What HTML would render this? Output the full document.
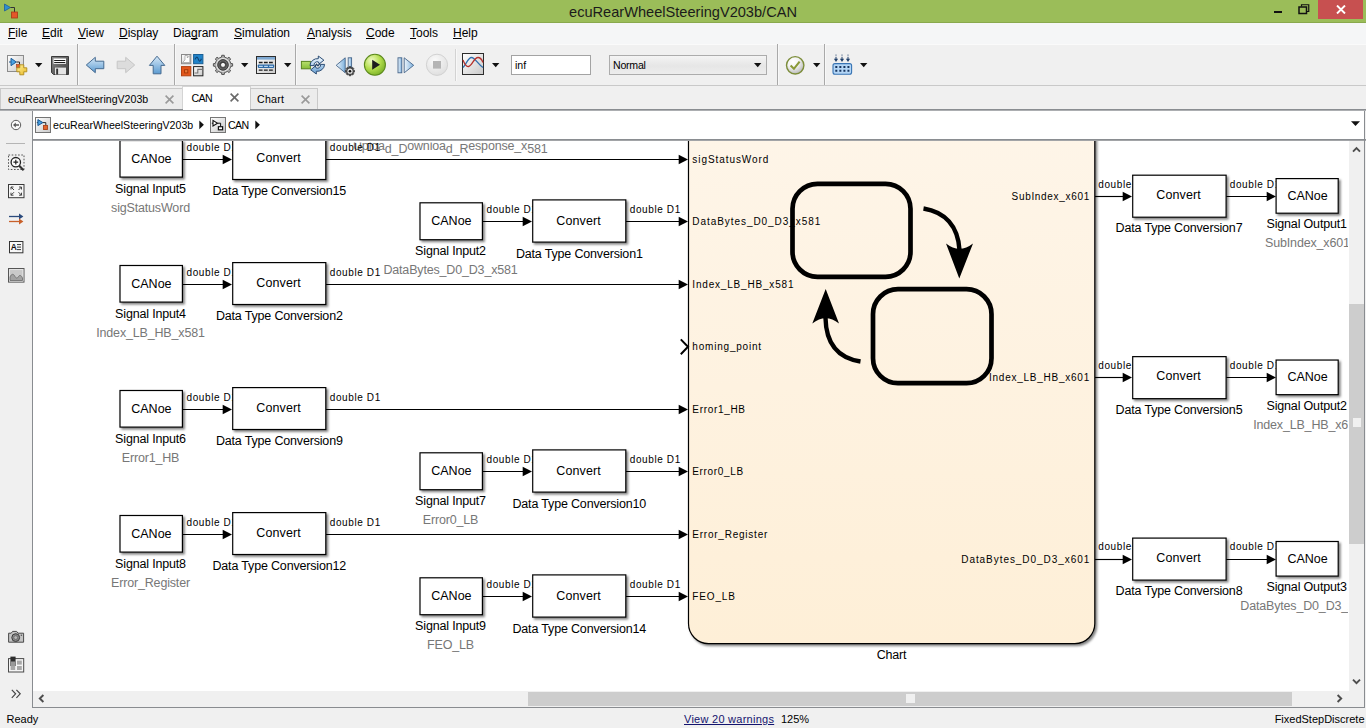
<!DOCTYPE html>
<html lang="en"><head><meta charset="utf-8"><title>ecuRearWheelSteeringV203b/CAN</title>
<style>
*{box-sizing:border-box;margin:0;padding:0}
html,body{width:1366px;height:728px;overflow:hidden;background:#f0f0f0;font-family:"Liberation Sans", sans-serif;color:#000}
.abs{position:absolute}
#title{left:0;top:0;width:1366px;height:23px;background:#9bbd59;border-bottom:1px solid #89a94d}
#title .t{position:absolute;left:0;width:1366px;top:3px;text-align:center;font-size:14.6px;line-height:18px;color:#1b1b1b}
#menu{left:0;top:23px;width:1366px;height:21px;background:#f5f6f7}
#menu span{position:absolute;top:2px;font-size:12px;line-height:16px;white-space:nowrap}
#menu u{text-decoration:underline;text-underline-offset:1px;text-decoration-skip-ink:none}
#tool{left:0;top:44px;width:1366px;height:42px;background:#f0f0f0;border-top:1px solid #fafafa;border-bottom:1px solid #c9c9c9}
.vsep{position:absolute;top:45px;width:1px;height:40px;background:#c4c4c4;box-shadow:1px 0 0 #fbfbfb}
.dd{position:absolute;width:0;height:0;border-left:4px solid transparent;border-right:4px solid transparent;border-top:4px solid #111}
#tabs{left:0;top:86px;width:1366px;height:24px;background:#f0f0f0}
.tab{position:absolute;top:2px;height:21px;background:#ececec;border:1px solid #c9c9c9;border-bottom:none;font-size:10.6px;line-height:20px;white-space:nowrap}
.tab.on{top:0;height:24px;background:#fff;border-color:#d4d4d4;line-height:22px}
.tab .x{position:absolute;top:6px;width:9px;height:9px;line-height:0}
#crumb{left:0;top:111px;width:1366px;height:29px;background:#f0f0f0}
#status{left:0;top:708px;width:1366px;height:20px;background:#f0f0f0;font-size:11px;line-height:20px}
</style></head>
<body>
<div id="title" class="abs"><div class="t">ecuRearWheelSteeringV203b/CAN</div>
<svg class="abs" style="left:4px;top:3px" width="16" height="16" viewBox="0 0 16 16"><path d="M0.5 1L6.5 4.5L0.5 8Z" fill="#2f8fd0" stroke="#1f5f95" stroke-width="0.8"/><path d="M6.5 4.5H10.5V9" fill="none" stroke="#333" stroke-width="1"/><rect x="7.5" y="9" width="6" height="6" fill="#e4572a" stroke="#a53a17" stroke-width="0.8"/></svg>
<div class="abs" style="left:1274px;top:11px;width:8px;height:2px;background:#111"></div>
<svg class="abs" style="left:1298px;top:4px" width="12" height="11" viewBox="0 0 12 11"><path d="M3.5 2.5V0.75H10.75V7.5H9" fill="none" stroke="#111" stroke-width="1.2"/><rect x="1" y="3" width="7.5" height="6.5" fill="none" stroke="#111" stroke-width="1.5"/></svg>
<div class="abs" style="left:1318px;top:0;width:45px;height:19px;background:#c75050"></div>
<svg class="abs" style="left:1336px;top:5px" width="10" height="9" viewBox="0 0 10 9"><path d="M1 0.5L9 8.5M9 0.5L1 8.5" stroke="#fff" stroke-width="1.9" fill="none"/></svg>
</div>
<div id="menu" class="abs">
<span style="left:8px"><u>F</u>ile</span>
<span style="left:42px"><u>E</u>dit</span>
<span style="left:78px"><u>V</u>iew</span>
<span style="left:119px"><u>D</u>isplay</span>
<span style="left:173px">Dia<u>g</u>ram</span>
<span style="left:234px"><u>S</u>imulation</span>
<span style="left:307px"><u>A</u>nalysis</span>
<span style="left:366px"><u>C</u>ode</span>
<span style="left:410px"><u>T</u>ools</span>
<span style="left:453px"><u>H</u>elp</span>
</div>
<div id="tool" class="abs"></div>
<svg width="0" height="0" style="position:absolute"><defs>
<linearGradient id="gBlue" x1="0" y1="0" x2="0" y2="1"><stop offset="0" stop-color="#d6e8f7"/><stop offset="1" stop-color="#5b9bd1"/></linearGradient>
<linearGradient id="gBlueH" x1="0" y1="0" x2="1" y2="0"><stop offset="0" stop-color="#eef5fb"/><stop offset="1" stop-color="#7db1de"/></linearGradient>
<linearGradient id="gPage" x1="0" y1="0" x2="1" y2="1"><stop offset="0" stop-color="#ffffff"/><stop offset="1" stop-color="#c9c9c9"/></linearGradient>
<linearGradient id="gSave" x1="0" y1="0" x2="1" y2="1"><stop offset="0" stop-color="#8a8a8a"/><stop offset="1" stop-color="#3c3c3c"/></linearGradient>
<radialGradient id="gRun" cx="0.35" cy="0.3" r="0.8"><stop offset="0" stop-color="#f1fbc8"/><stop offset="0.5" stop-color="#b4de4e"/><stop offset="1" stop-color="#73ab22"/></radialGradient>
<radialGradient id="gStop" cx="0.4" cy="0.3" r="0.8"><stop offset="0" stop-color="#fafafa"/><stop offset="1" stop-color="#dcdcdc"/></radialGradient>
<radialGradient id="gChk" cx="0.38" cy="0.3" r="0.75"><stop offset="0" stop-color="#ffffff"/><stop offset="0.45" stop-color="#f2f2f2"/><stop offset="1" stop-color="#b4b4b4"/></radialGradient>
<radialGradient id="gGear" cx="0.5" cy="0.5" r="0.5"><stop offset="0.45" stop-color="#2f2f2f"/><stop offset="0.8" stop-color="#6b6b6b"/><stop offset="1" stop-color="#4a4a4a"/></radialGradient>
<linearGradient id="gYel" x1="0" y1="0" x2="1" y2="1"><stop offset="0" stop-color="#fff2a0"/><stop offset="1" stop-color="#e9b820"/></linearGradient>
<linearGradient id="gCirc" x1="0" y1="3" x2="0" y2="17" gradientUnits="userSpaceOnUse"><stop offset="0.1" stop-color="#e2effa"/><stop offset="0.9" stop-color="#7fb0dc"/></linearGradient>
<linearGradient id="gGrn" x1="0" y1="0" x2="0" y2="1"><stop offset="0" stop-color="#b9e06e"/><stop offset="1" stop-color="#86bd38"/></linearGradient>
</defs></svg>
<svg class="abs" style="left:6px;top:54px" width="22" height="22" viewBox="0 0 22 22"><rect x="1.5" y="1.5" width="16" height="16" fill="url(#gPage)" stroke="#8c8c8c" stroke-width="1"/><path d="M3 8H5" stroke="#1d4f80" stroke-width="1"/><path d="M5 4.3L10.3 8L5 11.7Z" fill="#4aa3e3" stroke="#1f5f9b" stroke-width="1"/><path d="M10.5 8H13.5V10.5" fill="none" stroke="#2e2e2e" stroke-width="1"/><rect x="10.6" y="10.6" width="3.2" height="3" fill="#e2622a" stroke="#a8431a" stroke-width="0.7"/><path d="M13.8 10.8H17.8V13.8H20.8V17.8H17.8V20.8H13.8V17.8H10.8V13.8H13.8Z" fill="url(#gYel)" stroke="#b08a1a" stroke-width="0.9"/></svg>
<svg class="abs" style="left:35px;top:63px" width="8" height="5" viewBox="0 0 8 5"><path d="M0 0H7.4L3.7 4.2Z" fill="#111"/></svg>
<svg class="abs" style="left:51px;top:56px" width="18" height="19" viewBox="0 0 18 19"><path d="M0.5 0.5H17.5V18.5H2.5L0.5 16.5Z" fill="url(#gSave)" stroke="#3a3a3a" stroke-width="1"/><rect x="2.5" y="2.5" width="12.5" height="5.3" fill="#fff"/><path d="M3.2 4.5H14.3M3.2 6.5H14.3" stroke="#1c1c1c" stroke-width="1"/><rect x="4" y="11.6" width="11" height="6.9" fill="#e4e4e4"/><rect x="5.2" y="12.6" width="1.9" height="5.9" fill="#333"/></svg>
<div class="abs" style="left:77px;top:44px;width:1px;height:41px;background:#a9a9a9"></div><div class="abs" style="left:78px;top:44px;width:1px;height:41px;background:#f8f8f8"></div>
<svg class="abs" style="left:85px;top:56px" width="20" height="18" viewBox="0 0 20 18"><path d="M1.3 9L10.3 1.3V5.2H18.8V12.7H10.3V16.7Z" fill="url(#gBlue)" stroke="#456a90" stroke-width="1" stroke-linejoin="round"/></svg>
<svg class="abs" style="left:116px;top:56px" width="20" height="18" viewBox="0 0 20 18"><path d="M18.7 9L9.7 1.3V5.2H1.2V12.7H9.7V16.7Z" fill="#dcdcdc" stroke="#c6c6c6" stroke-width="1" stroke-linejoin="round"/></svg>
<svg class="abs" style="left:148px;top:55px" width="18" height="20" viewBox="0 0 18 20"><path d="M9 1.2L16.8 10.4H13V18.8H5.2V10.4H1.4Z" fill="url(#gBlue)" stroke="#456a90" stroke-width="1" stroke-linejoin="round"/></svg>
<div class="abs" style="left:174px;top:44px;width:1px;height:41px;background:#a9a9a9"></div><div class="abs" style="left:175px;top:44px;width:1px;height:41px;background:#f8f8f8"></div>
<svg class="abs" style="left:181px;top:54px" width="23" height="23" viewBox="0 0 23 23"><rect x="0.5" y="0.5" width="9.3" height="9.2" fill="url(#gPage)" stroke="#8a8a8a" stroke-width="1"/><path d="M1.5 8.5L4 6V1.5H6.3V4L8.8 1.5V8.5Z" fill="#fff" stroke="#8a8a8a" stroke-width="0.6"/><rect x="12.6" y="0.5" width="9.3" height="9.2" fill="#2183c9" stroke="#195f95" stroke-width="1"/><path d="M14.2 5.4C15.4 2.2 16.4 2.2 17.3 5.2C18.2 8 19.2 8 20.4 4.8" fill="none" stroke="#0d3f6e" stroke-width="1.1"/><rect x="0.5" y="12.6" width="9.3" height="9.2" fill="#e2571c" stroke="#b34212" stroke-width="1"/><rect x="3.6" y="15.7" width="3.2" height="3.2" fill="#e97a3a" stroke="#a03608" stroke-width="0.9"/><rect x="12.6" y="12.6" width="9.3" height="9.2" fill="url(#gPage)" stroke="#222" stroke-width="1"/><path d="M13.6 19H16.8V15.4H21" fill="none" stroke="#777" stroke-width="1.1"/></svg>
<svg class="abs" style="left:212px;top:54px" width="22" height="22" viewBox="0 0 22 22"><path d="M18.75 9.36L20.62 9.68L20.62 12.12L18.75 12.44L17.57 15.29L18.66 16.85L16.95 18.56L15.39 17.47L12.54 18.65L12.22 20.52L9.78 20.52L9.46 18.65L6.61 17.47L5.05 18.56L3.34 16.85L4.43 15.29L3.25 12.44L1.38 12.12L1.38 9.68L3.25 9.36L4.43 6.51L3.34 4.95L5.05 3.24L6.61 4.33L9.46 3.15L9.78 1.28L12.22 1.28L12.54 3.15L15.39 4.33L16.95 3.24L18.66 4.95L17.57 6.51Z" fill="#a8a8a8" stroke="#555" stroke-width="1" stroke-linejoin="round"/><circle cx="11" cy="10.9" r="7.3" fill="#b4b4b4"/><circle cx="11" cy="10.9" r="6.3" fill="none" stroke="#e6e6e6" stroke-width="1.1"/><circle cx="11" cy="10.9" r="5.3" fill="url(#gGear)" stroke="#3a3a3a" stroke-width="0.9"/><circle cx="11" cy="10.9" r="2.5" fill="#f6f6f6" stroke="#2c2c2c" stroke-width="0.8"/></svg>
<svg class="abs" style="left:241px;top:63px" width="8" height="5" viewBox="0 0 8 5"><path d="M0 0H7.4L3.7 4.2Z" fill="#111"/></svg>
<svg class="abs" style="left:256px;top:56px" width="21" height="19" viewBox="0 0 21 19"><rect x="0.5" y="0.5" width="19" height="17" fill="url(#gPage)" stroke="#2d2d2d" stroke-width="1"/><rect x="1" y="1" width="18" height="2.6" fill="#7fa9d2"/><path d="M2.8 6.5H17" stroke="#1c1c1c" stroke-width="1.3" stroke-dasharray="3.8 1.3"/><rect x="1.8" y="8.5" width="16.4" height="3.4" rx="0.8" fill="#2d6aa6"/><path d="M3 10.3H17" stroke="#bcd8f2" stroke-width="1.2" stroke-dasharray="3.8 1.3"/><path d="M2.8 14.2H17" stroke="#1c1c1c" stroke-width="1.3" stroke-dasharray="3.8 1.3"/></svg>
<svg class="abs" style="left:284px;top:63px" width="8" height="5" viewBox="0 0 8 5"><path d="M0 0H7.4L3.7 4.2Z" fill="#111"/></svg>
<div class="abs" style="left:295px;top:44px;width:1px;height:41px;background:#a9a9a9"></div><div class="abs" style="left:296px;top:44px;width:1px;height:41px;background:#f8f8f8"></div>
<svg class="abs" style="left:300px;top:55px" width="26" height="20" viewBox="0 0 26 20"><rect x="1.4" y="6.4" width="9" height="7.4" fill="url(#gGrn)" stroke="#5a8422" stroke-width="1"/><path d="M10 10.6A7.4 7.4 0 0 1 18.3 3.7V1L23.9 5.2L19.2 8.9L18.4 6.95A3.2 3.2 0 0 0 14.1 10.6ZM24.6 9.4A7.4 7.4 0 0 1 16.3 16.3V19L10.7 14.8L15.4 11.1L16.2 13.05A3.2 3.2 0 0 0 20.5 9.4Z" fill="url(#gCirc)" stroke="#2b4c74" stroke-width="1" stroke-linejoin="round"/><path d="M14.6 11.6L16.5 9.2L18 10.9L20 8.4" fill="none" stroke="#1f3f66" stroke-width="1.2"/></svg>
<svg class="abs" style="left:335px;top:56.5px" width="20" height="20" viewBox="0 0 20 20"><path d="M1.2 8.3L10.2 0.8V15.8Z" fill="url(#gBlueH)" stroke="#46658a" stroke-width="0.9" stroke-linejoin="round"/><rect x="13.2" y="0.8" width="3.4" height="11" fill="url(#gBlueH)" stroke="#46658a" stroke-width="0.9"/><path d="M18.54 13.13L19.62 13.32L19.62 15.08L18.54 15.27L18.26 15.94L18.89 16.84L17.64 18.09L16.74 17.46L16.07 17.74L15.88 18.82L14.12 18.82L13.93 17.74L13.26 17.46L12.36 18.09L11.11 16.84L11.74 15.94L11.46 15.27L10.38 15.08L10.38 13.32L11.46 13.13L11.74 12.46L11.11 11.56L12.36 10.31L13.26 10.94L13.93 10.66L14.12 9.58L15.88 9.58L16.07 10.66L16.74 10.94L17.64 10.31L18.89 11.56L18.26 12.46Z" fill="#454545" stroke="#333" stroke-width="0.6" stroke-linejoin="round"/><circle cx="15" cy="14.2" r="2.6" fill="#e4e4e4"/><circle cx="15" cy="14.2" r="1.3" fill="#111"/></svg>
<svg class="abs" style="left:363px;top:53px" width="24" height="24" viewBox="0 0 24 24"><circle cx="11.9" cy="11.8" r="10.5" fill="url(#gRun)" stroke="#5c8a1c" stroke-width="1.1"/><path d="M9.2 6.8L17 11.8L9.2 16.8Z" fill="#1d1d1d"/></svg>
<svg class="abs" style="left:397px;top:56.5px" width="18" height="17" viewBox="0 0 18 17"><rect x="1" y="0.8" width="3.8" height="15" fill="url(#gBlueH)" stroke="#46658a" stroke-width="0.9"/><path d="M7.2 0.8L16.7 8.3L7.2 15.8Z" fill="url(#gBlueH)" stroke="#46658a" stroke-width="0.9" stroke-linejoin="round"/></svg>
<svg class="abs" style="left:425px;top:53px" width="24" height="24" viewBox="0 0 24 24"><circle cx="12" cy="11.8" r="10.6" fill="url(#gStop)" stroke="#d2d2d2" stroke-width="1"/><rect x="8" y="8" width="8" height="7.6" fill="#b4b4b4"/></svg>
<div class="abs" style="left:455px;top:49px;width:1px;height:32px;background:#d3d3d3"></div><div class="abs" style="left:456px;top:49px;width:1px;height:32px;background:#f8f8f8"></div>
<svg class="abs" style="left:462px;top:53px" width="22" height="22" viewBox="0 0 22 22"><rect x="0.5" y="0.5" width="21" height="21" fill="url(#gPage)" stroke="#2c2c2c" stroke-width="1"/><path d="M1 14.5C4 12 6 4.5 9.5 4.5C13 4.5 16 11.5 21 14.5" fill="none" stroke="#2f6fae" stroke-width="1.3"/><path d="M1 7C2.5 11 4 14 6.5 13.5C10 13 12 4.5 16 4.5C18.5 4.5 20 7 21 9.5" fill="none" stroke="#b5312c" stroke-width="1.3"/></svg>
<svg class="abs" style="left:492px;top:63px" width="8" height="5" viewBox="0 0 8 5"><path d="M0 0H7.4L3.7 4.2Z" fill="#111"/></svg>
<div class="abs" style="left:511px;top:55px;width:80px;height:20px;background:#fff;border:1px solid #a3a3a3;font-size:10.6px;line-height:18px;padding-left:3px">inf</div>
<div class="abs" style="left:609px;top:55px;width:158px;height:20px;background:linear-gradient(#f4f4f4,#e6e6e6 55%,#ededed);border:1px solid #acacac;font-size:10.6px;letter-spacing:-0.25px;line-height:19px;padding-left:3px">Normal</div>
<svg class="abs" style="left:754px;top:63px" width="8" height="5" viewBox="0 0 8 5"><path d="M0 0H7.4L3.7 4.2Z" fill="#111"/></svg>
<div class="abs" style="left:777px;top:44px;width:1px;height:41px;background:#a9a9a9"></div><div class="abs" style="left:778px;top:44px;width:1px;height:41px;background:#f8f8f8"></div>
<svg class="abs" style="left:785px;top:54.5px" width="21" height="21" viewBox="0 0 21 21"><circle cx="10.2" cy="10.3" r="8.7" fill="url(#gChk)" stroke="#7c8d3a" stroke-width="1.4"/><path d="M5.6 10.6L8.9 13.8L14.6 6.6" fill="none" stroke="#8a9a38" stroke-width="2.1"/></svg>
<svg class="abs" style="left:813px;top:63px" width="8" height="5" viewBox="0 0 8 5"><path d="M0 0H7.4L3.7 4.2Z" fill="#111"/></svg>
<div class="abs" style="left:824px;top:44px;width:1px;height:41px;background:#a9a9a9"></div><div class="abs" style="left:825px;top:44px;width:1px;height:41px;background:#f8f8f8"></div>
<svg class="abs" style="left:831.5px;top:54px" width="21" height="21" viewBox="0 0 21 21"><rect x="1" y="9.6" width="18.6" height="10.6" rx="2" fill="#b4d6f6" stroke="#3874b4" stroke-width="1.1"/><path d="M3.3 13H17.4M3.3 16.8H17.4" stroke="#17355f" stroke-width="1.9" stroke-dasharray="2 2.05"/><path d="M4 0.6V6M10 0.6V6M16 0.6V6" stroke="#1f3f6a" stroke-width="1" stroke-dasharray="1 1.2 10"/><path d="M1.9 4.8H6.1L4 8ZM7.9 4.8H12.1L10 8ZM13.9 4.8H18.1L16 8Z" fill="#1f3f6a"/></svg>
<svg class="abs" style="left:860px;top:63px" width="8" height="5" viewBox="0 0 8 5"><path d="M0 0H7.4L3.7 4.2Z" fill="#111"/></svg>
<div id="tabs" class="abs">
<div class="tab" style="left:0;width:184px;padding-left:7px">ecuRearWheelSteeringV203b<span class="x" style="left:163.5px"><svg width="9" height="9" viewBox="0 0 9 9"><path d="M0.6 0.6L8.4 8.4M8.4 0.6L0.6 8.4" stroke="#9a9a9a" stroke-width="1.6" fill="none"/></svg></span></div>
<div class="tab on" style="left:182px;width:69px;padding-left:8.5px"><span style="letter-spacing:-0.6px">CAN</span><span class="x" style="left:46.5px;top:6.3px"><svg width="9" height="9" viewBox="0 0 9 9"><path d="M0.6 0.6L8.4 8.4M8.4 0.6L0.6 8.4" stroke="#6a6a6a" stroke-width="1.6" fill="none"/></svg></span></div>
<div class="tab" style="left:250px;width:68px;padding-left:6px"><span style="letter-spacing:0.25px">Chart</span><span class="x" style="left:49.5px"><svg width="9" height="9" viewBox="0 0 9 9"><path d="M0.6 0.6L8.4 8.4M8.4 0.6L0.6 8.4" stroke="#9a9a9a" stroke-width="1.6" fill="none"/></svg></span></div>
</div>
<div class="abs" style="left:0;top:109px;width:1366px;height:1px;background:#8a8d91"></div>
<div class="abs" style="left:0;top:110px;width:1366px;height:1px;background:#acaeb1"></div>
<div class="abs" style="left:183px;top:109px;width:67px;height:1px;background:#fff"></div>
<div id="crumb" class="abs"></div>
<div class="abs" style="left:33px;top:111px;width:1331px;height:28px;background:#fff"></div>
<svg class="abs" style="left:10px;top:119px" width="12" height="12" viewBox="0 0 12 12"><circle cx="6" cy="6" r="4.7" fill="#fbfbfb" stroke="#5c5c5c" stroke-width="1"/><path d="M3 6L5.8 3.5V5.2H9V6.8H5.8V8.5Z" fill="#5a5a5a"/></svg>
<svg class="abs" style="left:35px;top:117px" width="16" height="16" viewBox="0 0 16 16"><rect x="0.5" y="0.5" width="15" height="15" fill="url(#gPage)" stroke="#747474" stroke-width="1"/><path d="M1.8 5.6H3M7.9 5.6H10.8V8.4" fill="none" stroke="#2a2a2a" stroke-width="1"/><path d="M2.9 2.6L7.9 5.6L2.9 8.6Z" fill="#49a2e4" stroke="#1a5792" stroke-width="1"/><rect x="8.5" y="8.5" width="4" height="4" fill="#e4652c" stroke="#a8431a" stroke-width="0.9"/></svg>
<div class="abs" style="left:53px;top:117px;font-size:10.6px;line-height:16px;white-space:nowrap">ecuRearWheelSteeringV203b</div>
<svg class="abs" style="left:199.2px;top:120px" width="6" height="10" viewBox="0 0 6 10"><path d="M0.3 0.4L4.9 4.8L0.3 9.2Z" fill="#111"/></svg>
<svg class="abs" style="left:210px;top:117px" width="16" height="16" viewBox="0 0 16 16"><rect x="0.5" y="0.5" width="15" height="15" fill="url(#gPage)" stroke="#767676" stroke-width="1"/><path d="M1.8 6.2H3M7.5 6.2H10.6V9.4" fill="none" stroke="#111" stroke-width="1"/><path d="M3 3.4L7.5 6.2L3 9Z" fill="#fff" stroke="#111" stroke-width="1.1"/><rect x="8.4" y="9.7" width="4.2" height="3.1" fill="#fff" stroke="#111" stroke-width="1.2"/></svg>
<div class="abs" style="left:228px;top:117px;font-size:10.6px;line-height:16px;white-space:nowrap;letter-spacing:-0.65px">CAN</div>
<svg class="abs" style="left:255px;top:120px" width="6" height="10" viewBox="0 0 6 10"><path d="M0.3 0.4L4.9 4.8L0.3 9.2Z" fill="#111"/></svg>
<svg class="abs" style="left:1351px;top:121px" width="10" height="6" viewBox="0 0 10 6"><path d="M0 0.3H9L4.5 5Z" fill="#111"/></svg>
<div class="abs" style="left:0;top:139px;width:32px;height:569px;background:#f0f0f0"></div>
<div class="abs" style="left:33px;top:141px;width:1316px;height:550px;background:#fff"></div>
<div class="abs" style="left:33px;top:139px;width:1333px;height:1px;background:#8a8d91"></div>
<div class="abs" style="left:33px;top:140px;width:1333px;height:1px;background:#a2a4a7"></div>
<div class="abs" style="left:32px;top:111px;width:1px;height:597px;background:#898c90"></div>
<div class="abs" style="left:1364px;top:111px;width:1px;height:597px;background:#898c90"></div>
<div class="abs" style="left:6px;top:143px;width:19px;height:1px;background:#b5b5b5"></div>
<svg class="abs" style="left:8px;top:154px" width="17" height="18" viewBox="0 0 17 18"><rect x="0.5" y="1" width="15.5" height="14.5" fill="none" stroke="#555" stroke-width="1" stroke-dasharray="1.6 1.6"/><circle cx="7.8" cy="8.2" r="4.7" fill="#fff" stroke="#222" stroke-width="1.3"/><path d="M5.4 8.2H10.2M7.8 5.8V10.6" stroke="#222" stroke-width="1.2"/><path d="M11.2 11.8L15.6 16.2" stroke="#333" stroke-width="2.2"/></svg>
<svg class="abs" style="left:8px;top:184px" width="17" height="15" viewBox="0 0 17 15"><rect x="0.5" y="0.5" width="15.5" height="13.2" fill="#f6f6f6" stroke="#3a3a3a" stroke-width="1"/><path d="M3 5.5V3H5.5M3 3L6 6M13.5 5.5V3H11M13.5 3L10.5 6M3 8.7V11.2H5.5M3 11.2L6 8.2M13.5 8.7V11.2H11M13.5 11.2L10.5 8.2" fill="none" stroke="#444" stroke-width="1"/></svg>
<svg class="abs" style="left:8px;top:212px" width="17" height="14" viewBox="0 0 17 14"><path d="M1 4.5H12" stroke="#2a4a7c" stroke-width="1.3"/><path d="M11 1.6L15.4 4.5L11 7.4Z" fill="#2a4a7c"/><path d="M1 9.5H12" stroke="#c8602a" stroke-width="1.3"/><path d="M11 6.6L15.4 9.5L11 12.4Z" fill="#c8602a"/></svg>
<svg class="abs" style="left:9px;top:240.5px" width="15" height="13" viewBox="0 0 15 13"><rect x="0.5" y="0.5" width="13.4" height="11.3" fill="#f8f8f8" stroke="#333" stroke-width="1"/><text x="1.8" y="9.4" font-family="Liberation Sans, sans-serif" font-weight="bold" font-size="8.4" fill="#111">A</text><path d="M8 3.6H12M8 6.1H12M8 8.6H12" stroke="#333" stroke-width="1"/></svg>
<svg class="abs" style="left:8px;top:268px" width="17" height="15" viewBox="0 0 17 15"><rect x="0.5" y="0.5" width="15.5" height="13.6" fill="#c9c9c9" stroke="#555" stroke-width="1"/><rect x="1.6" y="1.6" width="13.3" height="11.4" fill="none" stroke="#e8e8e8" stroke-width="0.9"/><path d="M2 12.5V9C3.5 5.5 5.5 5.5 7 8.5C8 10.5 9.4 10.5 10.5 8.5C11.8 6.5 13.4 7.5 14.5 10V12.5Z" fill="#a2a2a2" stroke="#6a6a6a" stroke-width="0.8"/></svg>
<svg class="abs" style="left:8px;top:630px" width="17" height="14" viewBox="0 0 17 14"><path d="M0.6 3.2H3.2L4.6 1.4H8.6L10 3.2H15.6V12.2H0.6Z" fill="#c4c4c4" stroke="#4a4a4a" stroke-width="1"/><circle cx="7.7" cy="7.6" r="3.9" fill="#8a8a8a" stroke="#3c3c3c" stroke-width="1"/><circle cx="7.7" cy="7.6" r="1.9" fill="#b8b8b8" stroke="#555" stroke-width="0.6"/><circle cx="13.4" cy="5.2" r="0.8" fill="#555"/></svg>
<svg class="abs" style="left:8px;top:656px" width="17" height="17" viewBox="0 0 17 17"><rect x="0.5" y="2.6" width="15.2" height="13.4" fill="#f4f4f4" stroke="#4a4a4a" stroke-width="1"/><rect x="2.6" y="10" width="4.6" height="4" fill="#a8a8a8"/><rect x="9" y="10" width="4.8" height="4" fill="#a8a8a8"/><rect x="9" y="4.6" width="4.8" height="4" fill="#a8a8a8"/><path d="M2.4 0.6H7.6V10H2.4Z" fill="#2d2d2d"/><path d="M2.9 5.5H7.1V10H2.9Z" fill="#bdbdbd" opacity="0.75"/></svg>
<svg class="abs" style="left:11px;top:689px" width="11" height="10" viewBox="0 0 11 10"><path d="M0.8 0.8L4.6 4.8L0.8 8.8M5.4 0.8L9.2 4.8L5.4 8.8" fill="none" stroke="#444" stroke-width="1.2"/></svg>
<svg id="dg" width="1315" height="550" viewBox="33 141 1315 550" style="position:absolute;left:33px;top:141px;overflow:hidden" font-family='"Liberation Sans", sans-serif'>
<defs><filter id="sh" x="-10%" y="-10%" width="130%" height="140%"><feDropShadow dx="1.8" dy="1.8" stdDeviation="1.3" flood-color="#000" flood-opacity="0.5"/></filter><linearGradient id="cg" x1="0" y1="0" x2="0" y2="1"><stop offset="0" stop-color="#fef5e8"/><stop offset="0.5" stop-color="#fef2e0"/><stop offset="1" stop-color="#feefd7"/></linearGradient></defs>
<clipPath id="tc"><rect x="33" y="142.6" width="700" height="14"/></clipPath>
<text x="353" y="150.3" font-size="12.5" letter-spacing="-0.17" fill="#777" clip-path="url(#tc)">Uploa<tspan dy="2.6">d_D</tspan><tspan dy="-2.6">ownloa</tspan><tspan dy="2.6">d_R</tspan><tspan dy="-2.6">esponse_x</tspan><tspan dy="2.2">581</tspan></text>
<text x="186.5" y="150.6" font-size="10" letter-spacing="0.6">double D1</text>
<text x="329.8" y="150.6" font-size="10" letter-spacing="0.6">double D1</text>
<text x="486.5" y="212.6" font-size="10" letter-spacing="0.6">double D1</text>
<text x="629.8" y="212.6" font-size="10" letter-spacing="0.6">double D1</text>
<text x="186.5" y="275.6" font-size="10" letter-spacing="0.6">double D1</text>
<text x="329.8" y="275.6" font-size="10" letter-spacing="0.6">double D1</text>
<text x="186.5" y="400.6" font-size="10" letter-spacing="0.6">double D1</text>
<text x="329.8" y="400.6" font-size="10" letter-spacing="0.6">double D1</text>
<text x="486.5" y="462.6" font-size="10" letter-spacing="0.6">double D1</text>
<text x="629.8" y="462.6" font-size="10" letter-spacing="0.6">double D1</text>
<text x="186.5" y="525.6" font-size="10" letter-spacing="0.6">double D1</text>
<text x="329.8" y="525.6" font-size="10" letter-spacing="0.6">double D1</text>
<text x="486.5" y="587.6" font-size="10" letter-spacing="0.6">double D1</text>
<text x="629.8" y="587.6" font-size="10" letter-spacing="0.6">double D1</text>
<text x="1098.3" y="187.5" font-size="10" letter-spacing="0.6">double D1</text>
<text x="1229.8" y="187.5" font-size="10" letter-spacing="0.6">double D1</text>
<text x="1098.3" y="368.95" font-size="10" letter-spacing="0.6">double D1</text>
<text x="1229.8" y="368.95" font-size="10" letter-spacing="0.6">double D1</text>
<text x="1098.3" y="550.4" font-size="10" letter-spacing="0.6">double D1</text>
<text x="1229.8" y="550.4" font-size="10" letter-spacing="0.6">double D1</text>
<path d="M182 159.5H224" stroke="#000" stroke-width="1.15" fill="none"/>
<path d="M232 159.5L222.7 154.8V164.2Z" fill="#000"/>
<path d="M326 159.5H680" stroke="#000" stroke-width="1.15" fill="none"/>
<path d="M688 159.5L678.7 154.8V164.2Z" fill="#000"/>
<path d="M482 221.5H524" stroke="#000" stroke-width="1.15" fill="none"/>
<path d="M532 221.5L522.7 216.8V226.2Z" fill="#000"/>
<path d="M626 221.5H680" stroke="#000" stroke-width="1.15" fill="none"/>
<path d="M688 221.5L678.7 216.8V226.2Z" fill="#000"/>
<path d="M182 284.5H224" stroke="#000" stroke-width="1.15" fill="none"/>
<path d="M232 284.5L222.7 279.8V289.2Z" fill="#000"/>
<path d="M326 284.5H680" stroke="#000" stroke-width="1.15" fill="none"/>
<path d="M688 284.5L678.7 279.8V289.2Z" fill="#000"/>
<path d="M182 409.5H224" stroke="#000" stroke-width="1.15" fill="none"/>
<path d="M232 409.5L222.7 404.8V414.2Z" fill="#000"/>
<path d="M326 409.5H680" stroke="#000" stroke-width="1.15" fill="none"/>
<path d="M688 409.5L678.7 404.8V414.2Z" fill="#000"/>
<path d="M482 471.5H524" stroke="#000" stroke-width="1.15" fill="none"/>
<path d="M532 471.5L522.7 466.8V476.2Z" fill="#000"/>
<path d="M626 471.5H680" stroke="#000" stroke-width="1.15" fill="none"/>
<path d="M688 471.5L678.7 466.8V476.2Z" fill="#000"/>
<path d="M182 534.5H224" stroke="#000" stroke-width="1.15" fill="none"/>
<path d="M232 534.5L222.7 529.8V539.2Z" fill="#000"/>
<path d="M326 534.5H680" stroke="#000" stroke-width="1.15" fill="none"/>
<path d="M688 534.5L678.7 529.8V539.2Z" fill="#000"/>
<path d="M482 596.5H524" stroke="#000" stroke-width="1.15" fill="none"/>
<path d="M532 596.5L522.7 591.8V601.2Z" fill="#000"/>
<path d="M626 596.5H680" stroke="#000" stroke-width="1.15" fill="none"/>
<path d="M688 596.5L678.7 591.8V601.2Z" fill="#000"/>
<path d="M1095 196.5H1124" stroke="#000" stroke-width="1.15" fill="none"/>
<path d="M1132 196.5L1122.7 191.8V201.2Z" fill="#000"/>
<path d="M1226 196.5H1268" stroke="#000" stroke-width="1.15" fill="none"/>
<path d="M1276 196.5L1266.7 191.8V201.2Z" fill="#000"/>
<path d="M1095 377.5H1124" stroke="#000" stroke-width="1.15" fill="none"/>
<path d="M1132 377.5L1122.7 372.8V382.2Z" fill="#000"/>
<path d="M1226 377.5H1268" stroke="#000" stroke-width="1.15" fill="none"/>
<path d="M1276 377.5L1266.7 372.8V382.2Z" fill="#000"/>
<path d="M1095 559.5H1124" stroke="#000" stroke-width="1.15" fill="none"/>
<path d="M1132 559.5L1122.7 554.8V564.2Z" fill="#000"/>
<path d="M1226 559.5H1268" stroke="#000" stroke-width="1.15" fill="none"/>
<path d="M1276 559.5L1266.7 554.8V564.2Z" fill="#000"/>
<path d="M688.5 130V623.6a20 20 0 0 0 20 20H1074.8a20 20 0 0 0 20-20V130Z" fill="url(#cg)" stroke="#000" stroke-width="1.2" filter="url(#sh)"/>
<path d="M680.8 339.4L688 346.8L680.8 354.2" stroke="#000" stroke-width="2" fill="none"/>
<text x="692.3" y="162.7" font-size="10" textLength="76.1" lengthAdjust="spacing">sigStatusWord</text>
<text x="692.3" y="225.2" font-size="10" textLength="128.0" lengthAdjust="spacing">DataBytes_D0_D3_x581</text>
<text x="692.3" y="287.7" font-size="10" textLength="101.2" lengthAdjust="spacing">Index_LB_HB_x581</text>
<text x="692.3" y="350.2" font-size="10" textLength="68.8" lengthAdjust="spacing">homing_point</text>
<text x="692.3" y="412.7" font-size="10" textLength="52.7" lengthAdjust="spacing">Error1_HB</text>
<text x="692.3" y="475.2" font-size="10" textLength="50.8" lengthAdjust="spacing">Error0_LB</text>
<text x="692.3" y="537.7" font-size="10" textLength="75.0" lengthAdjust="spacing">Error_Register</text>
<text x="692.3" y="600.2" font-size="10" textLength="42.6" lengthAdjust="spacing">FEO_LB</text>
<text x="1011.6" y="199.8" font-size="10" textLength="77.6" lengthAdjust="spacing">SubIndex_x601</text>
<text x="989.0" y="381.25" font-size="10" textLength="100.2" lengthAdjust="spacing">Index_LB_HB_x601</text>
<text x="961.2" y="562.7" font-size="10" textLength="128.0" lengthAdjust="spacing">DataBytes_D0_D3_x601</text>
<rect x="792.5" y="183.8" width="118" height="93" rx="25" ry="25" fill="none" stroke="#000" stroke-width="4.7"/>
<rect x="873" y="289.2" width="118.5" height="94" rx="25" ry="25" fill="none" stroke="#000" stroke-width="4.7"/>
<path d="M923.5 208.5C945 212 958 226 959.5 250" fill="none" stroke="#000" stroke-width="4.4"/>
<path d="M959.3 278.5L946 243.5Q959.5 254 973 243.5Z" fill="#000"/>
<path d="M860.5 361.5C838 358 826 344 825.5 318" fill="none" stroke="#000" stroke-width="4.4"/>
<path d="M825.7 289L812.3 323.5Q825.7 313 839 323.5Z" fill="#000"/>
<rect x="120" y="140.5" width="62.4" height="36.6" fill="#fff" stroke="#000" stroke-width="1.2" filter="url(#sh)"/>
<text x="151.4" y="162.6" font-size="12.5" text-anchor="middle" letter-spacing="0">CANoe</text>
<rect x="232.7" y="137.6" width="93.1" height="41.9" fill="#fff" stroke="#000" stroke-width="1.2" filter="url(#sh)"/>
<text x="278.6" y="161.7" font-size="12.5" text-anchor="middle" letter-spacing="0.1">Convert</text>
<rect x="420" y="202.8" width="62.4" height="36.9" fill="#fff" stroke="#000" stroke-width="1.2" filter="url(#sh)"/>
<text x="451.4" y="224.6" font-size="12.5" text-anchor="middle" letter-spacing="0">CANoe</text>
<rect x="532.7" y="199.9" width="93.1" height="42.2" fill="#fff" stroke="#000" stroke-width="1.2" filter="url(#sh)"/>
<text x="578.6" y="224.6" font-size="12.5" text-anchor="middle" letter-spacing="0.1">Convert</text>
<rect x="120" y="265.5" width="62.4" height="36.6" fill="#fff" stroke="#000" stroke-width="1.2" filter="url(#sh)"/>
<text x="151.4" y="287.6" font-size="12.5" text-anchor="middle" letter-spacing="0">CANoe</text>
<rect x="232.7" y="262.6" width="93.1" height="41.9" fill="#fff" stroke="#000" stroke-width="1.2" filter="url(#sh)"/>
<text x="278.6" y="286.7" font-size="12.5" text-anchor="middle" letter-spacing="0.1">Convert</text>
<rect x="120" y="390.5" width="62.4" height="36.6" fill="#fff" stroke="#000" stroke-width="1.2" filter="url(#sh)"/>
<text x="151.4" y="412.6" font-size="12.5" text-anchor="middle" letter-spacing="0">CANoe</text>
<rect x="232.7" y="387.6" width="93.1" height="41.9" fill="#fff" stroke="#000" stroke-width="1.2" filter="url(#sh)"/>
<text x="278.6" y="411.7" font-size="12.5" text-anchor="middle" letter-spacing="0.1">Convert</text>
<rect x="420" y="452.8" width="62.4" height="36.9" fill="#fff" stroke="#000" stroke-width="1.2" filter="url(#sh)"/>
<text x="451.4" y="474.6" font-size="12.5" text-anchor="middle" letter-spacing="0">CANoe</text>
<rect x="532.7" y="449.9" width="93.1" height="42.2" fill="#fff" stroke="#000" stroke-width="1.2" filter="url(#sh)"/>
<text x="578.6" y="474.6" font-size="12.5" text-anchor="middle" letter-spacing="0.1">Convert</text>
<rect x="120" y="515.5" width="62.4" height="36.6" fill="#fff" stroke="#000" stroke-width="1.2" filter="url(#sh)"/>
<text x="151.4" y="537.6" font-size="12.5" text-anchor="middle" letter-spacing="0">CANoe</text>
<rect x="232.7" y="512.6" width="93.1" height="41.9" fill="#fff" stroke="#000" stroke-width="1.2" filter="url(#sh)"/>
<text x="278.6" y="536.7" font-size="12.5" text-anchor="middle" letter-spacing="0.1">Convert</text>
<rect x="420" y="577.8" width="62.4" height="36.9" fill="#fff" stroke="#000" stroke-width="1.2" filter="url(#sh)"/>
<text x="451.4" y="599.6" font-size="12.5" text-anchor="middle" letter-spacing="0">CANoe</text>
<rect x="532.7" y="574.9" width="93.1" height="42.2" fill="#fff" stroke="#000" stroke-width="1.2" filter="url(#sh)"/>
<text x="578.6" y="599.6" font-size="12.5" text-anchor="middle" letter-spacing="0.1">Convert</text>
<rect x="1132.7" y="175.2" width="93.4" height="42" fill="#fff" stroke="#000" stroke-width="1.2" filter="url(#sh)"/>
<text x="1178.6" y="199.0" font-size="12.5" text-anchor="middle" letter-spacing="0.1">Convert</text>
<rect x="1276.1" y="178.6" width="62.1" height="34.6" fill="#fff" stroke="#000" stroke-width="1.2" filter="url(#sh)"/>
<text x="1307.6" y="199.6" font-size="12.5" text-anchor="middle" letter-spacing="0">CANoe</text>
<rect x="1132.7" y="356.65" width="93.4" height="42" fill="#fff" stroke="#000" stroke-width="1.2" filter="url(#sh)"/>
<text x="1178.6" y="380.45" font-size="12.5" text-anchor="middle" letter-spacing="0.1">Convert</text>
<rect x="1276.1" y="360.05" width="62.1" height="34.6" fill="#fff" stroke="#000" stroke-width="1.2" filter="url(#sh)"/>
<text x="1307.6" y="381.05" font-size="12.5" text-anchor="middle" letter-spacing="0">CANoe</text>
<rect x="1132.7" y="538.1" width="93.4" height="42" fill="#fff" stroke="#000" stroke-width="1.2" filter="url(#sh)"/>
<text x="1178.6" y="561.9" font-size="12.5" text-anchor="middle" letter-spacing="0.1">Convert</text>
<rect x="1276.1" y="541.5" width="62.1" height="34.6" fill="#fff" stroke="#000" stroke-width="1.2" filter="url(#sh)"/>
<text x="1307.6" y="562.5" font-size="12.5" text-anchor="middle" letter-spacing="0">CANoe</text>
<text x="150.5" y="192.5" font-size="12.5" text-anchor="middle" letter-spacing="-0.17">Signal Input5</text>
<text x="150.5" y="211.5" font-size="12.5" text-anchor="middle" letter-spacing="-0.17" fill="#777">sigStatusWord</text>
<text x="279.3" y="194.7" font-size="12.5" text-anchor="middle" letter-spacing="-0.17">Data Type Conversion15</text>
<text x="450.5" y="254.5" font-size="12.5" text-anchor="middle" letter-spacing="-0.17">Signal Input2</text>
<text x="450.5" y="273.5" font-size="12.5" text-anchor="middle" letter-spacing="-0.17" fill="#777">DataBytes_D0_D3_x581</text>
<text x="579.3" y="257.5" font-size="12.5" text-anchor="middle" letter-spacing="-0.17">Data Type Conversion1</text>
<text x="150.5" y="317.5" font-size="12.5" text-anchor="middle" letter-spacing="-0.17">Signal Input4</text>
<text x="150.5" y="336.5" font-size="12.5" text-anchor="middle" letter-spacing="-0.17" fill="#777">Index_LB_HB_x581</text>
<text x="279.3" y="319.7" font-size="12.5" text-anchor="middle" letter-spacing="-0.17">Data Type Conversion2</text>
<text x="150.5" y="442.5" font-size="12.5" text-anchor="middle" letter-spacing="-0.17">Signal Input6</text>
<text x="150.5" y="461.5" font-size="12.5" text-anchor="middle" letter-spacing="-0.17" fill="#777">Error1_HB</text>
<text x="279.3" y="444.7" font-size="12.5" text-anchor="middle" letter-spacing="-0.17">Data Type Conversion9</text>
<text x="450.5" y="504.5" font-size="12.5" text-anchor="middle" letter-spacing="-0.17">Signal Input7</text>
<text x="450.5" y="523.5" font-size="12.5" text-anchor="middle" letter-spacing="-0.17" fill="#777">Error0_LB</text>
<text x="579.3" y="507.5" font-size="12.5" text-anchor="middle" letter-spacing="-0.17">Data Type Conversion10</text>
<text x="150.5" y="567.5" font-size="12.5" text-anchor="middle" letter-spacing="-0.17">Signal Input8</text>
<text x="150.5" y="586.5" font-size="12.5" text-anchor="middle" letter-spacing="-0.17" fill="#777">Error_Register</text>
<text x="279.3" y="569.7" font-size="12.5" text-anchor="middle" letter-spacing="-0.17">Data Type Conversion12</text>
<text x="450.5" y="629.5" font-size="12.5" text-anchor="middle" letter-spacing="-0.17">Signal Input9</text>
<text x="450.5" y="648.5" font-size="12.5" text-anchor="middle" letter-spacing="-0.17" fill="#777">FEO_LB</text>
<text x="579.3" y="632.5" font-size="12.5" text-anchor="middle" letter-spacing="-0.17">Data Type Conversion14</text>
<text x="1179" y="232.4" font-size="12.5" text-anchor="middle" letter-spacing="-0.17">Data Type Conversion7</text>
<text x="1306.7" y="228.2" font-size="12.5" text-anchor="middle" letter-spacing="-0.17">Signal Output1</text>
<text x="1307.4" y="247.2" font-size="12.5" text-anchor="middle" letter-spacing="-0.17" fill="#777">SubIndex_x601</text>
<text x="1179" y="413.85" font-size="12.5" text-anchor="middle" letter-spacing="-0.17">Data Type Conversion5</text>
<text x="1306.7" y="409.65" font-size="12.5" text-anchor="middle" letter-spacing="-0.17">Signal Output2</text>
<text x="1307.4" y="428.65" font-size="12.5" text-anchor="middle" letter-spacing="-0.17" fill="#777">Index_LB_HB_x601</text>
<text x="1179" y="595.3" font-size="12.5" text-anchor="middle" letter-spacing="-0.17">Data Type Conversion8</text>
<text x="1306.7" y="591.1" font-size="12.5" text-anchor="middle" letter-spacing="-0.17">Signal Output3</text>
<text x="1307.4" y="610.1" font-size="12.5" text-anchor="middle" letter-spacing="-0.17" fill="#777">DataBytes_D0_D3_x601</text>
<text x="891.5" y="659" font-size="12.5" text-anchor="middle" letter-spacing="-0.17">Chart</text>
</svg>
<div class="abs" style="left:1349px;top:141px;width:15px;height:550px;background:#f0f0f0"></div>
<div class="abs" style="left:1349px;top:304px;width:15px;height:240px;background:#cdcdcd"></div>
<div class="abs" style="left:1353px;top:418px;width:8px;height:9px;background:#f0f0f0"></div>
<svg class="abs" style="left:1352px;top:146px" width="9" height="7" viewBox="0 0 9 7"><path d="M1 5.6L4.5 2L8 5.6" fill="none" stroke="#4d4d4d" stroke-width="1.9"/></svg>
<svg class="abs" style="left:1352px;top:678px" width="9" height="7" viewBox="0 0 9 7"><path d="M1 1.6L4.5 5.2L8 1.6" fill="none" stroke="#4d4d4d" stroke-width="1.9"/></svg>
<div class="abs" style="left:33px;top:691px;width:1331px;height:16px;background:#f0f0f0"></div>
<div class="abs" style="left:528px;top:692px;width:764px;height:14px;background:#cdcdcd"></div>
<div class="abs" style="left:906px;top:694px;width:9px;height:9px;background:#f0f0f0"></div>
<svg class="abs" style="left:38px;top:694px" width="7" height="9" viewBox="0 0 7 9"><path d="M5.4 1L1.8 4.5L5.4 8" fill="none" stroke="#4d4d4d" stroke-width="1.9"/></svg>
<svg class="abs" style="left:1336px;top:694px" width="7" height="9" viewBox="0 0 7 9"><path d="M1.6 1L5.2 4.5L1.6 8" fill="none" stroke="#4d4d4d" stroke-width="1.9"/></svg>
<div class="abs" style="left:32px;top:707px;width:1333px;height:1px;background:#898c90"></div>
<div id="status" class="abs"><span class="abs" style="left:6.5px;top:0.5px">Ready</span><span class="abs" style="left:684px;top:0.5px;color:#14146e;text-decoration:underline;letter-spacing:0.26px;white-space:nowrap">View 20 warnings</span><span class="abs" style="left:781px;top:0.5px">125%</span><span class="abs" style="right:1.5px;top:0.5px">FixedStepDiscrete</span></div>
</body></html>
